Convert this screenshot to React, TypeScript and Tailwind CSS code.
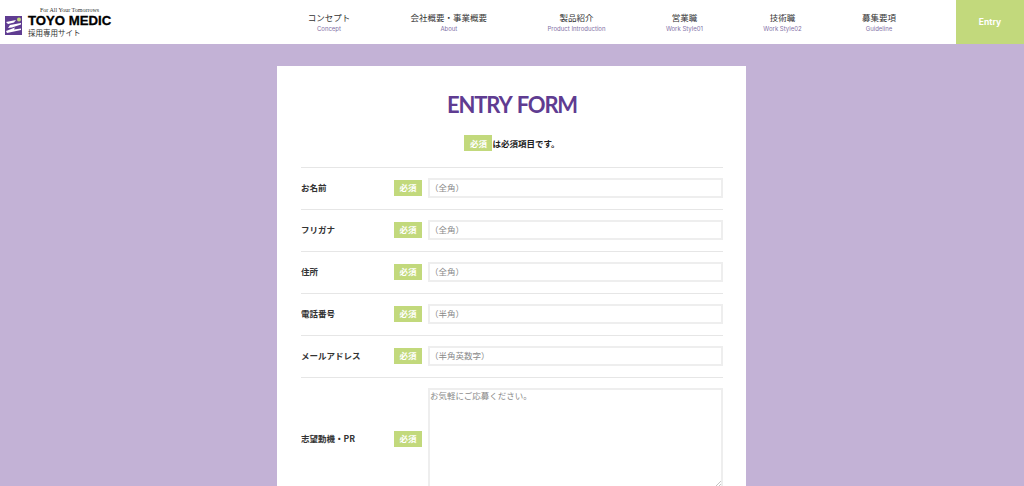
const nav = [
  ["コンセプト", "Concept"],
  ["会社概要・事業概要", "About"],
  ["製品紹介", "Product Introduction"],
  ["営業職", "Work Style01"],
  ["技術職", "Work Style02"],
  ["募集要項", "Guideline"],
];
const rows = [
  ["お名前", "（全角）"],
  ["フリガナ", "（全角）"],
  ["住所", "（全角）"],
  ["電話番号", "（半角）"],
  ["メールアドレス", "（半角英数字）"],
];
function Badge() {
  return (
    <span className="flex h-[16px] w-[28px] shrink-0 items-center justify-center bg-[#c2d97c] pb-[1px] text-[8.5px] font-bold text-white">
      必須
    </span>
  );
}
function Logo() {
  return (
    <div className="mr-auto flex w-[112px] shrink-0 flex-col pl-[5px] pt-[7px]">
      <div className="whitespace-nowrap pl-[35px] text-[6px] leading-[6px] text-[#333] [font-family:'Liberation_Serif',serif]">For All Your Tomorrows</div>
      <div className="flex">
        <svg width="17" height="19" viewBox="0 0 17 19" className="mt-[3px] shrink-0">
          <rect width="17" height="19" fill="#5f3c91" />
          <path d="M1 6 L11 4 L9 6.5 L3 8 Z" fill="#fff" />
          <path d="M5 9 L16 7 L16 8.5 L7 11.5 L3 12 Z" fill="#fff" />
          <path d="M1 15 L10 11.5 L9 13.5 L16 12.5 L16 14 L2 17 Z" fill="#fff" />
          <circle cx="14" cy="3.5" r="2" fill="#c2d97c" />
        </svg>
        <div className="pl-[6px]">
          <div className="whitespace-nowrap pt-[1px] text-[13.2px] font-bold leading-[13px] text-black [font-family:'Liberation_Sans',sans-serif] [-webkit-text-stroke:0.3px_black]">TOYO MEDIC</div>
          <div className="whitespace-nowrap text-[7.5px] leading-[12px] text-[#333]">採用専用サイト</div>
        </div>
      </div>
    </div>
  );
}
export default function App() {
  return (
    <div className="h-[486px] overflow-hidden bg-[#c3b2d6] [font-family:'Noto_Sans_CJK_JP',sans-serif]">
      <header className="flex h-[44px] items-stretch bg-white">
        <Logo />
        <nav className="flex items-start gap-[60.4px] pr-[60px] pt-[10px]">
          {nav.map(([ja, en]) => (
            <div key={en} className="flex flex-col items-center">
              <span className="whitespace-nowrap text-[8.5px] leading-[14px] text-[#333]">{ja}</span>
              <span className="whitespace-nowrap pt-[1px] text-[6px] leading-[8px] text-[#7f70a6] [font-family:Inter,sans-serif]">{en}</span>
            </div>
          ))}
        </nav>
        <div className="flex w-[68px] items-center justify-center bg-[#c2d97c] text-[8.5px] font-bold text-white [font-family:Inter,sans-serif]">Entry</div>
      </header>
      <main className="ml-[277px] mt-[22px] w-[469px] bg-white pb-[40px] pl-[24px] pr-[23px]">
        <h1 className="pt-[24px] text-center text-[22px] font-bold leading-[30px] tracking-[-1.2px] text-[#5f3c91] [font-family:Lato,sans-serif] [word-spacing:2px]">ENTRY FORM</h1>
        <p className="flex items-center justify-center pt-[15px] text-[8.5px] font-bold leading-[16px] text-[#222]">
          <Badge />は必須項目です。
        </p>
        <div className="mt-[16px] border-t border-[#e6e6e6]">
          {rows.map(([label, ph]) => (
            <div key={label} className="flex h-[42px] items-center border-b border-[#e6e6e6] pb-[1px]">
              <span className="w-[93px] pb-[2px] text-[8.5px] font-bold text-[#333]">{label}</span>
              <Badge />
              <input
                readOnly
                placeholder={ph}
                className="ml-[6px] h-[20px] flex-1 border-2 border-[#eeeeee] bg-white px-0 pb-[2px] text-[8.5px] outline-none placeholder:text-[#8a8a8a]"
              />
            </div>
          ))}
          <div className="flex items-center py-[10px]">
            <span className="w-[93px] pb-[2px] text-[8.5px] font-bold text-[#333]">志望動機・PR</span>
            <Badge />
            <div className="relative ml-[6px] h-[102px] flex-1">
              <textarea
                readOnly
                placeholder="お気軽にご応募ください。"
                className="block h-full w-full resize-none border-2 border-[#eeeeee] bg-white text-[8.5px] leading-[10px] outline-none placeholder:text-[#8a8a8a]"
              />
              <svg width="8" height="8" viewBox="0 0 8 8" className="absolute bottom-[2px] right-[2px]">
                <path d="M1 8 L8 1 M4 8 L8 4" stroke="#c4c4c4" strokeWidth="1" />
              </svg>
            </div>
          </div>
        </div>
      </main>
    </div>
  );
}
